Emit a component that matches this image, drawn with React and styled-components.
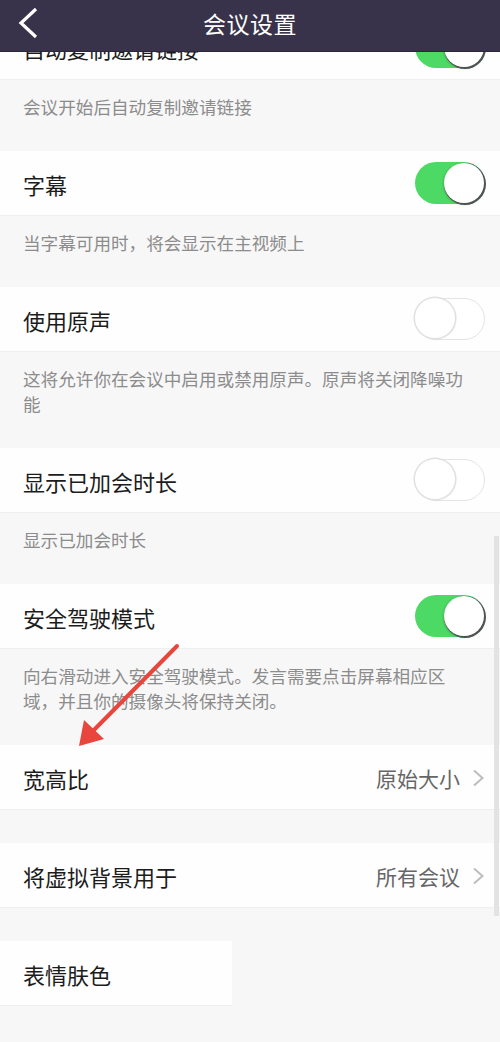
import React from 'react';
import styled, { createGlobalStyle } from 'styled-components';

const GlobalStyle = createGlobalStyle`
    html, body {
        margin: 0;
        padding: 0;
        background: #f7f7f7;
        font-family: "Noto Sans CJK SC", "Noto Sans", sans-serif;
    }
`

const Screen = styled.div`
    position: relative;
    width: 500px;
    height: 1042px;
    overflow: hidden;
    background: #f7f7f7;
`

const NavBar = styled.div`
    position: absolute;
    top: 0;
    left: 0;
    right: 0;
    height: 51px;
    background: #38334a;
    border-bottom: 1px solid #2b2739;
    display: flex;
    align-items: center;
    justify-content: center;
    z-index: 3;
`

const NavTitle = styled.div`
    color: #ffffff;
    font-size: 23px;
    letter-spacing: 0.5px;
    margin-top: -6px;
`

const BackButton = styled.div`
    position: absolute;
    left: 16px;
    top: 7px;
    width: 24px;
    height: 32px;
    display: flex;
    align-items: center;
`

const List = styled.div`
    padding-top: 15px;
    display: flex;
    flex-direction: column;
`

const Row = styled.div`
    height: 65px;
    box-sizing: border-box;
    width: ${props => props.narrow ? '232px' : '100%'};
    background: #fefefe;
    border-bottom: 1px solid #efefef;
    display: flex;
    align-items: center;
    justify-content: space-between;
    padding: 0 15px 0 23px;
`

const RowLabel = styled.span`
    font-size: 22px;
    color: #1c1c1c;
    margin-top: 1px;
`

const RowValue = styled.span`
    display: flex;
    align-items: center;
    gap: 12px;
    font-size: 21px;
    color: #666666;
    margin-top: 1px;
`

const Note = styled.div`
    padding: 14px 22px 32px 23px;
    font-size: 17.6px;
    line-height: 25px;
    color: #8c8c8c;
`

const Gap = styled.div`
    height: 33px;
`

const Track = styled.div`
    position: relative;
    width: 70px;
    height: 42px;
    box-sizing: border-box;
    border-radius: 21px;
    background: ${props => props.on ? '#4cd964' : '#ffffff'};
    border: ${props => props.on ? 'none' : '1.5px solid #e4e4e4'};
`

const Knob = styled.div`
    position: absolute;
    top: ${props => props.on ? '1px' : '-1px'};
    left: ${props => props.on ? '29px' : '-1px'};
    width: 40px;
    height: 40px;
    border-radius: 50%;
    background: #ffffff;
    box-shadow: ${props => props.on
        ? '1px 1px 0 1px #4c5450, 0 1px 3px rgba(0,0,0,0.3)'
        : '0 0 0 1.5px #e0e0e0, 1px 1px 2px rgba(0,0,0,0.08)'};
`

const ScrollThumb = styled.div`
    position: absolute;
    right: 1px;
    top: 536px;
    width: 5px;
    height: 380px;
    background: #e3e3e3;
    z-index: 2;
`

const Pointer = styled.svg`
    position: absolute;
    left: 70px;
    top: 638px;
    z-index: 2;
`

const Toggle = ({ on }) => (
    <Track on={on ? 1 : 0}>
        <Knob on={on ? 1 : 0} />
    </Track>
)

const Chevron = () => (
    <svg width="13" height="18" viewBox="0 0 13 18">
        <path d="M2 1.5 L10.5 9 L2 16.5" fill="none" stroke="#bdbdbd" strokeWidth="2" />
    </svg>
)

const settings = [
    { label: '自动复制邀请链接', on: true, note: '会议开始后自动复制邀请链接' },
    { label: '字幕', on: true, note: '当字幕可用时，将会显示在主视频上' },
    { label: '使用原声', on: false, note: '这将允许你在会议中启用或禁用原声。原声将关闭降噪功能' },
    { label: '显示已加会时长', on: false, note: '显示已加会时长' },
    { label: '安全驾驶模式', on: true, note: '向右滑动进入安全驾驶模式。发言需要点击屏幕相应区域，并且你的摄像头将保持关闭。' },
]

const App = () => {
    return (
        <Screen>
            <GlobalStyle />
            <NavBar>
                <BackButton>
                    <svg width="24" height="32" viewBox="0 0 24 32">
                        <path d="M20 2 L5 16 L20 30" fill="none" stroke="#ffffff" strokeWidth="3.2" />
                    </svg>
                </BackButton>
                <NavTitle>会议设置</NavTitle>
            </NavBar>
            <List>
                {settings.map(item => (
                    <React.Fragment key={item.label}>
                        <Row>
                            <RowLabel>{item.label}</RowLabel>
                            <Toggle on={item.on} />
                        </Row>
                        <Note>{item.note}</Note>
                    </React.Fragment>
                ))}
                <Row>
                    <RowLabel>宽高比</RowLabel>
                    <RowValue>原始大小<Chevron /></RowValue>
                </Row>
                <Gap />
                <Row>
                    <RowLabel>将虚拟背景用于</RowLabel>
                    <RowValue>所有会议<Chevron /></RowValue>
                </Row>
                <Gap />
                <Row narrow>
                    <RowLabel>表情肤色</RowLabel>
                </Row>
            </List>
            <ScrollThumb />
            <Pointer width="120" height="112" viewBox="0 0 120 112">
                <line x1="107" y1="8" x2="18" y2="98" stroke="#e8453c" strokeWidth="4" strokeLinecap="round" />
                <polygon points="9,108 14,82 34,101" fill="#e8453c" />
            </Pointer>
        </Screen>
    )
}

export default App
